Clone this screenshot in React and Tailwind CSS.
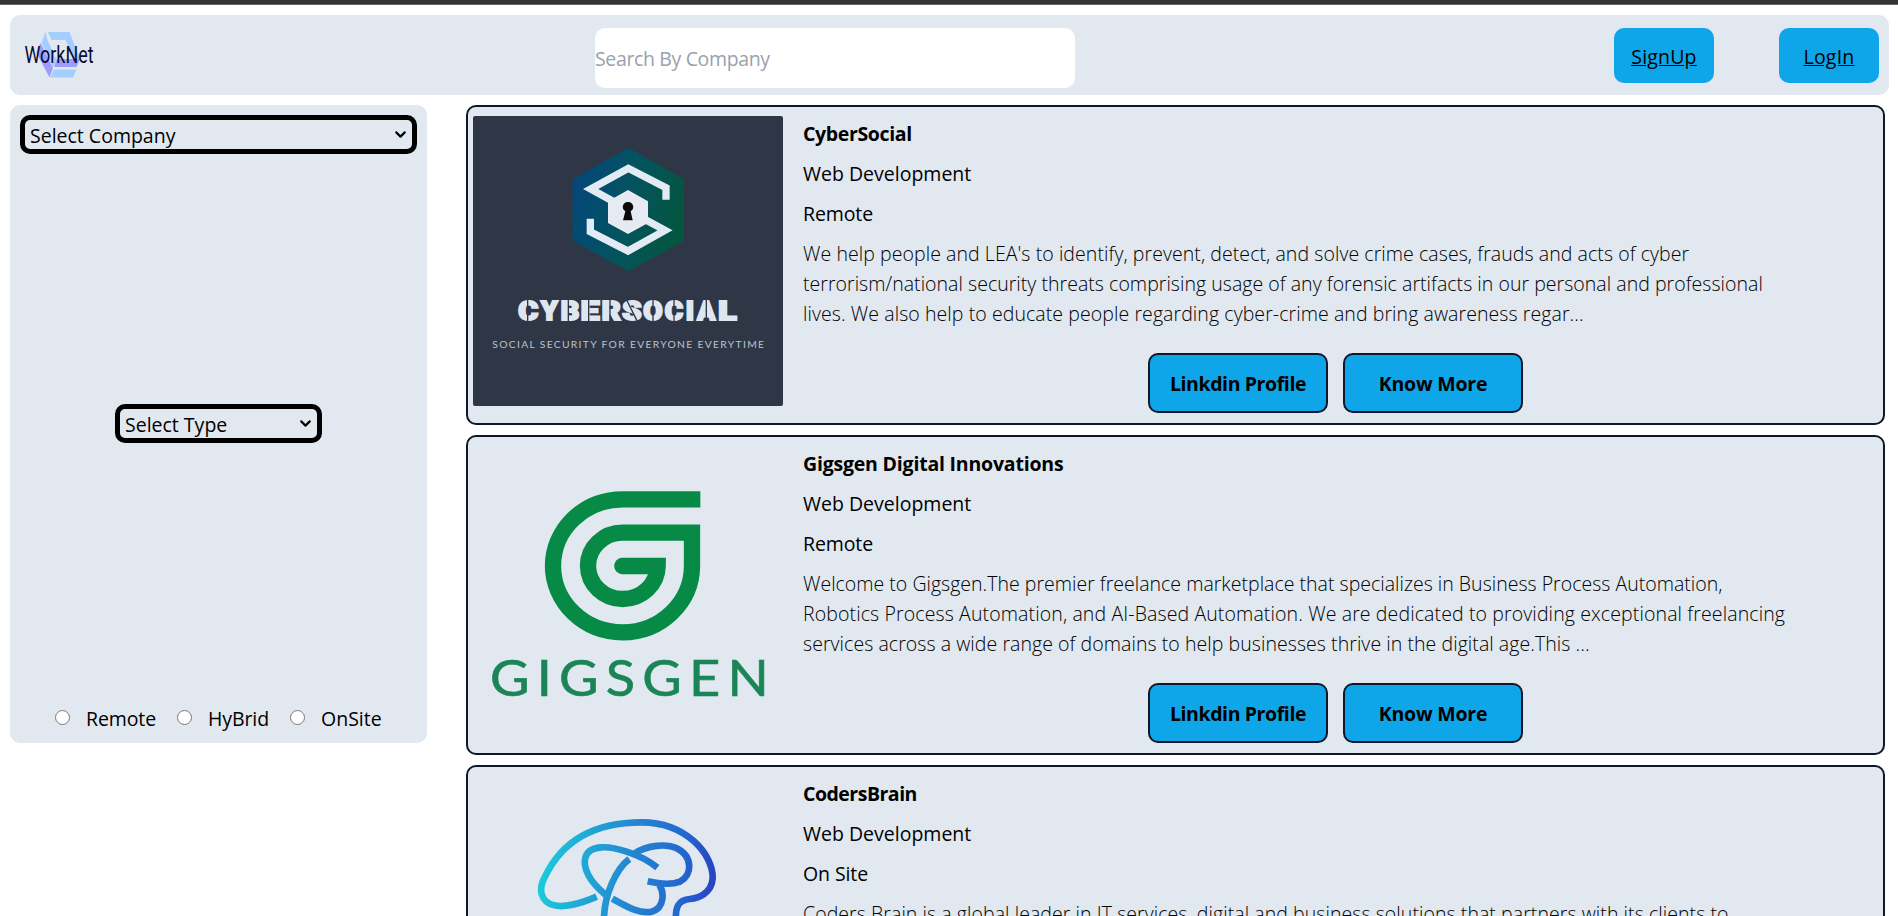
import { ChevronDown } from "lucide-react";

const companies = [
  {
    name: "CyberSocial",
    nameClass: "tracking-[-0.35px]",
    mode: "Remote",
    Logo: CyberSocialLogo,
    lines: [
      ["We help people and LEA's to identify, prevent, detect, and solve crime cases, frauds and acts of cyber", "tracking-[0.07px]"],
      ["terrorism/national security threats comprising usage of any forensic artifacts in our personal and professional", "tracking-[0.037px]"],
      ["lives. We also help to educate people regarding cyber-crime and bring awareness regar...", "tracking-[0.08px]"],
    ],
  },
  {
    name: "Gigsgen Digital Innovations",
    nameClass: "tracking-[-0.2px]",
    mode: "Remote",
    Logo: GigsgenLogo,
    lines: [
      ["Welcome to Gigsgen.The premier freelance marketplace that specializes in Business Process Automation,", "tracking-[0.015px]"],
      ["Robotics Process Automation, and AI-Based Automation. We are dedicated to providing exceptional freelancing", "tracking-[0.12px]"],
      ["services across a wide range of domains to help businesses thrive in the digital age.This ...", "tracking-[0.06px]"],
    ],
  },
  {
    name: "CodersBrain",
    nameClass: "tracking-[-0.5px]",
    mode: "On Site",
    Logo: CodersBrainLogo,
    lines: [
      ["Coders Brain is a global leader in IT services, digital and business solutions that partners with its clients to", "tracking-[0.065px]"],
    ],
  },
];

function WorkNetLogo() {
  return (
    <svg className="h-[50px] w-[72px] overflow-visible" viewBox="23 30 72 50">
      <path d="M48 32H69.5L80 59H74L65.5 40H51.5Z" fill="#a3ceff" />
      <path d="M45.5 32L41.5 43L53 67L57 61L47.5 40Z" fill="#a3ceff" />
      <path d="M40.5 43L36.5 53L49.5 77.5L53 68Z" fill="#9c9dfb" />
      <path d="M57 59H80L76.5 67H54Z" fill="#9c9dfb" />
      <path d="M53.5 69.5H76.5L73 77.5H50.5Z" fill="#a3ceff" />
      <text x="24.5" y="62.7" fontFamily="Roboto" fontSize="23.5" fill="#0b0b33" textLength="69" lengthAdjust="spacingAndGlyphs">WorkNet</text>
    </svg>
  );
}

const cyberLetters = [
  ["C", 175, 60], ["Y", 243, 50], ["B", 302, 56], ["E", 362, 56], ["R", 425, 57], ["S", 487, 58],
  ["O", 550, 58], ["C", 614, 55], ["I", 677, 25], ["A", 712, 54], ["L", 775, 55],
];

function CyberSocialLogo() {
  return (
    <svg className="h-[290px] w-[310px] rounded-[2px] bg-[#2f3746]" viewBox="39 48 930 870">
      <defs>
        <linearGradient id="hex" x1="0" y1="0.2" x2="1" y2="0.5">
          <stop offset="0" stopColor="#03467c" />
          <stop offset="0.5" stopColor="#035360" />
          <stop offset="1" stopColor="#04563f" />
        </linearGradient>
      </defs>
      <path d="M505 143L672 238V422L505 514L338 422V238Z" fill="url(#hex)" />
      <path d="M618 299V263L505 205L392 267L470 310" fill="none" stroke="#e2ebf3" strokeWidth="22" />
      <path d="M391 356V395L504 453L615 391L540 350" fill="none" stroke="#e2ebf3" strokeWidth="22" />
      <path d="M504 270L564 304V369L504 402L444 369V304Z" fill="#e6ebf3" />
      <path d="M504 306a15 15 0 0 1 8 28L518 361H489L496 334a15 15 0 0 1 8-28Z" fill="#0d0a0b" />
      <g fontFamily="Roboto" fontWeight="900" fontSize="80" fill="#dfe6f0" stroke="#dfe6f0" strokeWidth="6">
        {cyberLetters.map(([c, x, w]) => (
          <text key={x} x={x} y="660" textLength={w} lengthAdjust="spacingAndGlyphs">{c}</text>
        ))}
      </g>
      <path d="M203 600V664M325 600V664M386 600V664M450 600V664M500 600L532 664M579 600V664M642 600V664M739 600V664" stroke="#2f3746" strokeWidth="4" />
      <text x="97" y="744" fontFamily="Lato" fontSize="31" fill="#b9c2ce" textLength="815">SOCIAL SECURITY FOR EVERYONE EVERYTIME</text>
    </svg>
  );
}

function GigsgenLogo() {
  return (
    <svg className="h-[290px] w-[310px]" viewBox="39 48 930 870">
      <path
        d="M721 208H488A209 200 0 0 0 279 408A209 200 0 0 0 488 607A209 200 0 0 0 696 408V308H488A104 100 0 0 0 384 408A104 100 0 0 0 488 507A105 100 0 0 0 593 408H488"
        fill="none" stroke="#078a45" strokeWidth="49" strokeMiterlimit="10"
      />
      <circle cx="487" cy="408" r="24.5" fill="#078a45" />
      <text x="90" y="797" fontFamily="Lato" fontSize="150" fill="#1b8558" stroke="#1b8558" strokeWidth="2" letterSpacing="20" textLength="858" lengthAdjust="spacingAndGlyphs">GIGSGEN</text>
    </svg>
  );
}

function CodersBrainLogo() {
  return (
    <svg className="h-[290px] w-[310px]" viewBox="39 93 930 870">
      <defs>
        <linearGradient id="brain" gradientUnits="userSpaceOnUse" x1="240" y1="380" x2="765" y2="430">
          <stop offset="0" stopColor="#1bcada" />
          <stop offset="0.5" stopColor="#2487d2" />
          <stop offset="0.8" stopColor="#2368cf" />
          <stop offset="1" stopColor="#2b40c2" />
        </linearGradient>
      </defs>
      <g fill="none" stroke="url(#brain)" strokeWidth="20" strokeLinejoin="round">
        <path d="M410 455C360 477 310 488 283 481C243 472 233 435 255 395C305 290 400 232 545 232C680 232 760 330 758 400C755 445 715 460 690 462C655 465 645 485 648 530" />
        <path d="M592 368C540 325 460 305 425 307C370 310 365 350 385 390C400 420 420 435 440 452" />
        <path d="M508 342C470 370 430 450 432 530" />
        <path d="M525 325C560 300 620 295 650 310C700 335 697 390 660 410C630 422 590 415 563 409" />
        <path d="M457 461C500 485 540 508 575 500C615 490 612 440 598 420" />
      </g>
    </svg>
  );
}

function CompanyCard({ company }) {
  const { name, nameClass, mode, Logo, lines } = company;
  return (
    <article className="flex h-[320px] shrink-0 rounded-[10px] border-2 border-slate-900 bg-[#e1e8f0] pl-[5px]">
      <div className="pt-[9px]">
        <Logo />
      </div>
      <div className="flex flex-1 flex-col pt-[12px] pl-[20px] leading-[30px] whitespace-nowrap">
        <h2 className={"font-bold " + nameClass}>{name}</h2>
        <p className="mt-[10px] font-medium">Web Development</p>
        <p className="mt-[10px] font-medium tracking-[-0.1px]">{mode}</p>
        <div className="mt-[10px] h-[90px] font-[340]">
          {lines.map(([text, cls]) => (
            <p key={text} className={cls}>{text}</p>
          ))}
        </div>
        <div className="mt-[24px] flex gap-[15px] pl-[345px]">
          <button className="h-[60px] w-[180px] rounded-[10px] border-2 border-slate-900 bg-[#0ea5e9] pt-[2px] font-bold tracking-[-0.4px]">Linkdin Profile</button>
          <button className="h-[60px] w-[180px] rounded-[10px] border-2 border-slate-900 bg-[#0ea5e9] pt-[2px] font-bold tracking-[-0.2px]">Know More</button>
        </div>
      </div>
    </article>
  );
}

function Select({ label, className }) {
  return (
    <div className={"grid h-[39px] items-center rounded-[10px] border-5 border-black " + className}>
      <select className="col-start-1 row-start-1 h-[29px] appearance-none pt-[2px] pl-[5px] leading-[27px]">
        <option>{label}</option>
      </select>
      <ChevronDown className="pointer-events-none col-start-1 row-start-1 mr-[3px] size-[17px] justify-self-end" strokeWidth={3} />
    </div>
  );
}

export default function App() {
  return (
    <div className="h-[916px] overflow-hidden bg-white font-['Open_Sans','Noto_Sans',sans-serif] text-[19.5px] text-black">
      <div className="h-[5px] border-b border-[#666] bg-[#333]" />
      <header className="mx-[10px] mt-[10px] mr-[9px] flex h-[80px] items-start rounded-[10px] bg-[#e1e8f0] pr-[10px] pl-[13px]">
        <div className="w-[572px] pt-[15px]"><WorkNetLogo /></div>
        <input className="mt-[13px] h-[60px] w-[480px] rounded-[10px] bg-white pt-[1px] tracking-[-0.36px] placeholder:text-gray-400" placeholder="Search By Company" />
        <nav className="mt-[13px] ml-auto flex gap-[65px] font-medium tracking-[0.2px]">
          <a className="flex h-[55px] w-[100px] items-center justify-center rounded-[10px] bg-[#0ea5e9] pt-[2px] underline">SignUp</a>
          <a className="flex h-[55px] w-[100px] items-center justify-center rounded-[10px] bg-[#0ea5e9] pt-[2px] underline">LogIn</a>
        </nav>
      </header>
      <main className="mt-[10px] flex items-start pr-[13px] pl-[10px]">
        <aside className="flex h-[638px] w-[417px] flex-col items-center justify-between rounded-[10px] bg-[#e1e8f0] py-[10px]">
          <Select label="Select Company" className="w-[397px]" />
          <Select label="Select Type" className="w-[207px]" />
          <div className="flex h-[40px] items-center pt-[9px] font-medium">
            <input type="radio" className="mr-[16px] size-[15px]" /><label className="w-[91px] pt-[2px] tracking-[-0.1px]">Remote</label>
            <input type="radio" className="mr-[16px] size-[15px]" /><label className="w-[82px] pt-[2px] tracking-[-0.1px]">HyBrid</label>
            <input type="radio" className="mr-[16px] size-[15px]" /><label className="w-[61px] pt-[2px]">OnSite</label>
          </div>
        </aside>
        <section className="ml-[39px] flex flex-1 flex-col gap-[10px]">
          {companies.map((c) => <CompanyCard key={c.name} company={c} />)}
        </section>
      </main>
    </div>
  );
}
